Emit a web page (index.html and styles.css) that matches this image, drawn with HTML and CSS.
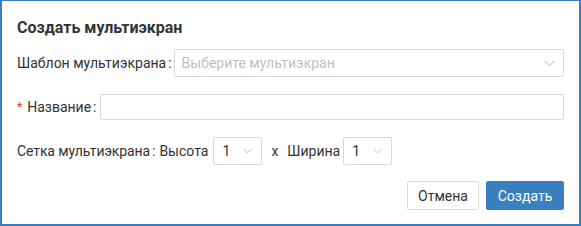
FILE: index.html
```html
<!DOCTYPE html>
<html lang="ru">
<head>
    <meta charset="UTF-8">
    <title>Создать мультиэкран</title>
    <link rel="stylesheet" href="styles.css">
</head>
<body>
    <div class="dialog">
        <h2>Создать мультиэкран</h2>

        <div class="form-row row-template">
            <label>Шаблон мультиэкрана<span class="colon">:</span></label>
            <div class="select select-wide">
                <span class="placeholder">Выберите мультиэкран</span>
                <svg class="chevron" width="11" height="7" viewBox="0 0 11 7"><path d="M0.5 0.8 L5.5 5.8 L10.5 0.8" fill="none" stroke="#b5b5b5" stroke-width="1"/></svg>
            </div>
        </div>

        <div class="form-row row-name">
            <label><span class="required">*</span>Название<span class="colon">:</span></label>
            <input type="text" class="text-input">
        </div>

        <div class="form-row row-grid">
            <label>Сетка мультиэкрана<span class="colon">:</span></label>
            <span class="sub-label sub-label-first">Высота</span>
            <div class="select select-small">
                <span>1</span>
                <svg class="chevron" width="11" height="7" viewBox="0 0 11 7"><path d="M0.5 0.8 L5.5 5.8 L10.5 0.8" fill="none" stroke="#b5b5b5" stroke-width="1"/></svg>
            </div>
            <span class="times">x</span>
            <span class="sub-label sub-label-tight">Ширина</span>
            <div class="select select-small">
                <span>1</span>
                <svg class="chevron" width="11" height="7" viewBox="0 0 11 7"><path d="M0.5 0.8 L5.5 5.8 L10.5 0.8" fill="none" stroke="#b5b5b5" stroke-width="1"/></svg>
            </div>
        </div>

        <div class="actions">
            <button class="btn btn-default">Отмена</button>
            <button class="btn btn-primary">Создать</button>
        </div>
    </div>
</body>
</html>
```

FILE: styles.css
```css
* {
    margin: 0;
    padding: 0;
    box-sizing: border-box;
    font-family: Roboto, 'Liberation Sans', sans-serif;
}

body {
    background-color: #fff;
}

.dialog {
    width: 581px;
    height: 226px;
    border: 2px solid #3a7fc0;
    border-top-width: 1px;
    padding: 17px 15px 0 15px;
    color: #333;
    font-size: 14px;
}

h2 {
    font-size: 16px;
    font-weight: 700;
    line-height: 20px;
    color: #333;
}

.form-row {
    display: flex;
    align-items: center;
}

.form-row label {
    display: flex;
    align-items: center;
    white-space: nowrap;
}

.colon {
    margin-left: 2px;
    margin-right: 2px;
}

.required {
    color: #e4393c;
    margin-right: 5px;
    font-size: 12px;
}

.row-template {
    margin-top: 11px;
    height: 28px;
}

.row-name {
    margin-top: 17px;
    height: 26px;
}

.row-name .colon {
    margin-right: 4px;
}

.row-grid {
    margin-top: 17px;
    height: 28px;
}

.row-grid label {
    letter-spacing: -0.1px;
}

.select {
    height: 28px;
    border: 1px solid #d9d9d9;
    border-radius: 2px;
    background-color: #fff;
    display: flex;
    align-items: center;
    justify-content: space-between;
    padding: 0 8px 0 7px;
}

.select-wide {
    flex: 1;
}

.select-small {
    width: 49px;
    padding: 0 9px 0 8px;
}

.select-small .chevron {
    width: 9px;
    height: 6px;
}

.placeholder {
    color: #bfbfbf;
}

.chevron {
    display: block;
}

.text-input {
    flex: 1;
    height: 26px;
    border: 1px solid #d9d9d9;
    border-radius: 2px;
    outline: none;
}

.sub-label {
    margin-right: 5px;
}

.sub-label-first {
    margin-left: 2px;
}

.sub-label-tight {
    margin-right: 3px;
}

.times {
    margin: 0 9px 0 9px;
}

.actions {
    margin-top: 16px;
    display: flex;
    justify-content: flex-end;
    gap: 7px;
}

.btn {
    height: 29px;
    font-size: 14px;
    border-radius: 2px;
    cursor: pointer;
}

.btn-default {
    width: 72px;
    background-color: #fff;
    border: 1px solid #d9d9d9;
    color: #333;
}

.btn-primary {
    width: 78px;
    background-color: #3a7fc0;
    border: 1px solid #3a7fc0;
    color: #fff;
}
```
